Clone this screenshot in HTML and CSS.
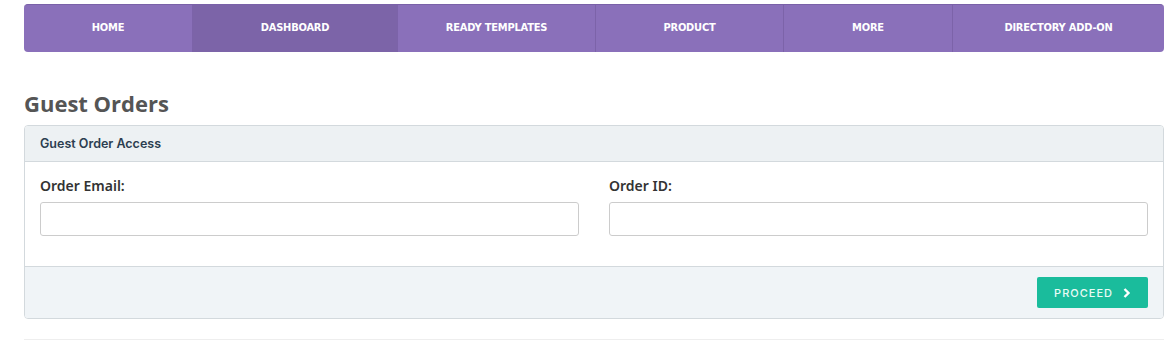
FILE: index.html
```html
<!DOCTYPE html>
<html lang="en">
<head>
    <meta charset="UTF-8">
    <meta name="viewport" content="width=device-width, initial-scale=1.0">
    <title>Guest Orders</title>
    <link rel="stylesheet" href="styles.css">
</head>
<body>

    <div class="page">
        <nav class="main-nav">
            <a href="#" class="nav-item nav-home">HOME</a>
            <a href="#" class="nav-item nav-dashboard active">DASHBOARD</a>
            <a href="#" class="nav-item nav-templates">READY TEMPLATES</a>
            <a href="#" class="nav-item nav-product">PRODUCT</a>
            <a href="#" class="nav-item nav-more">MORE</a>
            <a href="#" class="nav-item nav-directory">DIRECTORY ADD-ON</a>
        </nav>

        <h2 class="page-title">Guest Orders</h2>

        <form class="panel" id="guestOrderForm">
            <div class="panel-heading">Guest Order Access</div>

            <div class="panel-body">
                <div class="form-group">
                    <label for="order-email">Order Email:</label>
                    <input type="email" id="order-email">
                </div>
                <div class="form-group">
                    <label for="order-id">Order ID:</label>
                    <input type="text" id="order-id">
                </div>
            </div>

            <div class="panel-footer">
                <button type="submit" class="btn-proceed">
                    PROCEED
                    <svg width="8" height="10" viewBox="0 0 8 10"><path d="M1.5 1 L5.5 5 L1.5 9" fill="none" stroke="#fff" stroke-width="2.4"/></svg>
                </button>
            </div>
        </form>

        <hr class="divider">
    </div>

</body>
</html>
```

FILE: styles.css
```css
body {
    margin: 0;
    background-color: #fff;
    font-family: "Open Sans", Arial, sans-serif;
}
.page {
    padding: 4px 7px 0 24px;
}
.main-nav {
    display: grid;
    grid-template-columns: 168px 205px 198px 188px 169px 1fr;
    height: 47px;
    background-color: #8a70ba;
    border-top: 1px solid #7a61a8;
    border-radius: 4px;
    overflow: hidden;
}
.nav-item {
    display: flex;
    align-items: center;
    justify-content: center;
    color: #fff;
    text-decoration: none;
    font-family: Tahoma, "DejaVu Sans Condensed", "Open Sans", sans-serif;
    font-size: 11px;
    font-weight: bold;
    letter-spacing: -0.2px;
    border-left: 1px solid #7c63a9;
    padding-bottom: 2px;
}
.nav-item:first-child {
    border-left: none;
}
.nav-item.active {
    background-color: #7c64a8;
}
.page-title {
    margin: 38px 0 8px;
    font-size: 22px;
    font-weight: 700;
    color: #555;
    line-height: 27px;
}
.panel {
    border: 1px solid #d3d9dd;
    border-radius: 4px;
    overflow: hidden;
}
.panel-heading {
    height: 35px;
    line-height: 35px;
    padding: 0 15px;
    background-color: #edf1f3;
    border-bottom: 1px solid #d3d9dd;
    font-family: Inter, "Open Sans", sans-serif;
    font-size: 12.5px;
    font-weight: 600;
    color: #2c3e50;
}
.panel-body {
    display: grid;
    grid-template-columns: 1fr 1fr;
    gap: 30px;
    padding: 14px 15px 30px;
}
.form-group {
    display: flex;
    flex-direction: column;
}
label {
    font-family: "Noto Sans", "Open Sans", sans-serif;
    font-size: 14px;
    font-weight: 600;
    color: #333;
    margin-bottom: 6px;
    line-height: 20px;
}
input[type="text"], input[type="email"] {
    box-sizing: border-box;
    height: 34px;
    width: 100%;
    border: 1px solid #ccc;
    border-radius: 3px;
    padding: 6px 10px;
}
.panel-footer {
    display: flex;
    justify-content: flex-end;
    padding: 10px 15px 10px;
    background-color: #f0f4f7;
    border-top: 1px solid #d3d9dd;
}
.btn-proceed {
    display: flex;
    align-items: center;
    gap: 10px;
    height: 31px;
    padding: 0 17px;
    background-color: #1abc9c;
    color: #e9fbf6;
    border: none;
    border-radius: 2px;
    font-family: Inter, "Open Sans", sans-serif;
    font-size: 11px;
    font-weight: 500;
    letter-spacing: 1px;
    cursor: pointer;
}
.divider {
    margin: 20px 0 0;
    border: none;
    border-top: 1px solid #eee;
}
```
